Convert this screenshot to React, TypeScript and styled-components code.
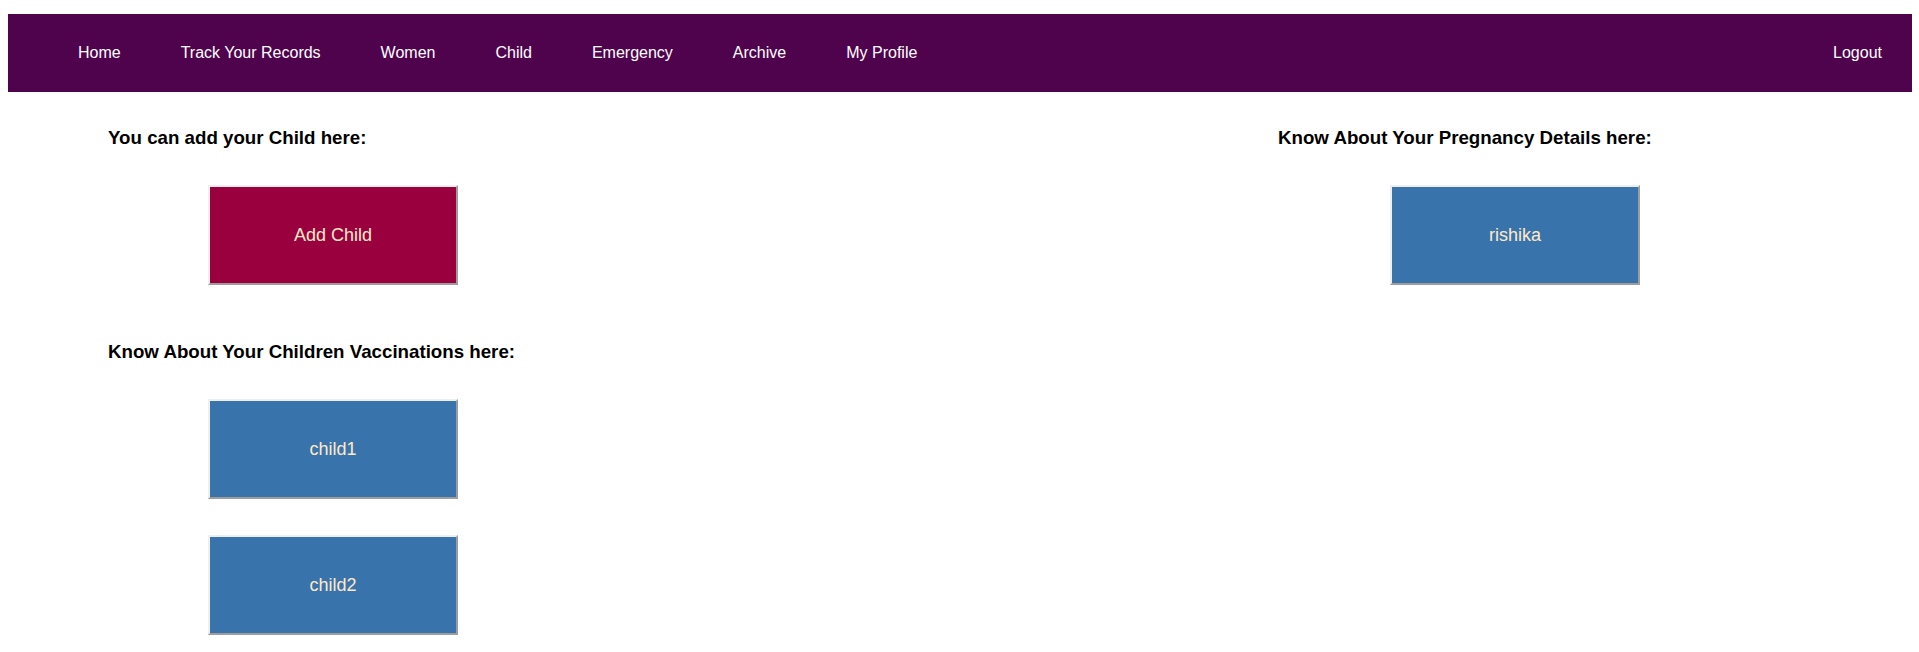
import React from 'react';
import styled, { createGlobalStyle } from 'styled-components';

const GlobalStyle = createGlobalStyle`
  body {
    margin: 14px 7px 8px 8px;
    background: #fff;
    color: #000;
    font-family: "Liberation Sans", Arial, Helvetica, sans-serif;
  }
`;

const NavBar = styled.nav`
  display: flex;
  align-items: flex-start;
  justify-content: space-between;
  padding: 21px 0 21px 40px;
  min-height: 36px;
  background: #50034d;
`;

const NavGroup = styled.div`
  display: flex;
`;

const NavLink = styled.a`
  padding: 8px 30px;
  color: #fff;
  font-size: 16px;
  line-height: 20px;
  text-decoration: none;
`;

const Page = styled.main`
  display: flex;
  justify-content: space-between;
  padding: 35px 0 0 100px;
`;

const Column = styled.div<{ $basis?: string }>`
  display: flex;
  flex-direction: column;
  gap: 56px;
  flex: 0 0 ${({ $basis }) => $basis ?? 'auto'};
`;

const Heading = styled.h3`
  margin: 0;
  line-height: 22px;
`;

const Tile = styled.button<{ $color: string; $indent: number }>`
  display: block;
  width: 250px;
  height: 100px;
  margin: 36px 0 0 ${({ $indent }) => $indent}px;
  border: 2px solid;
  border-color: #efefef #9d9d9d #9d9d9d #efefef;
  background: ${({ $color }) => $color};
  color: #ffe9c9;
  font: 18px "Liberation Sans", Arial, sans-serif;
  cursor: pointer;
`;

const links = ['Home', 'Track Your Records', 'Women', 'Child', 'Emergency', 'Archive', 'My Profile'];
const children = ['child1', 'child2'];

export default function App() {
  return (
    <>
      <GlobalStyle />
      <NavBar>
        <NavGroup>
          {links.map((label) => (
            <NavLink href="#" key={label}>{label}</NavLink>
          ))}
        </NavGroup>
        <NavLink href="#">Logout</NavLink>
      </NavBar>
      <Page>
        <Column>
          <section>
            <Heading>You can add your Child here:</Heading>
            <Tile $color="#99003d" $indent={100}>Add Child</Tile>
          </section>
          <section>
            <Heading>Know About Your Children Vaccinations here:</Heading>
            {children.map((name) => (
              <Tile $color="#3973ac" $indent={100} key={name}>{name}</Tile>
            ))}
          </section>
        </Column>
        <Column $basis="634px">
          <section>
            <Heading>Know About Your Pregnancy Details here:</Heading>
            <Tile $color="#3973ac" $indent={112}>rishika</Tile>
          </section>
        </Column>
      </Page>
    </>
  );
}
